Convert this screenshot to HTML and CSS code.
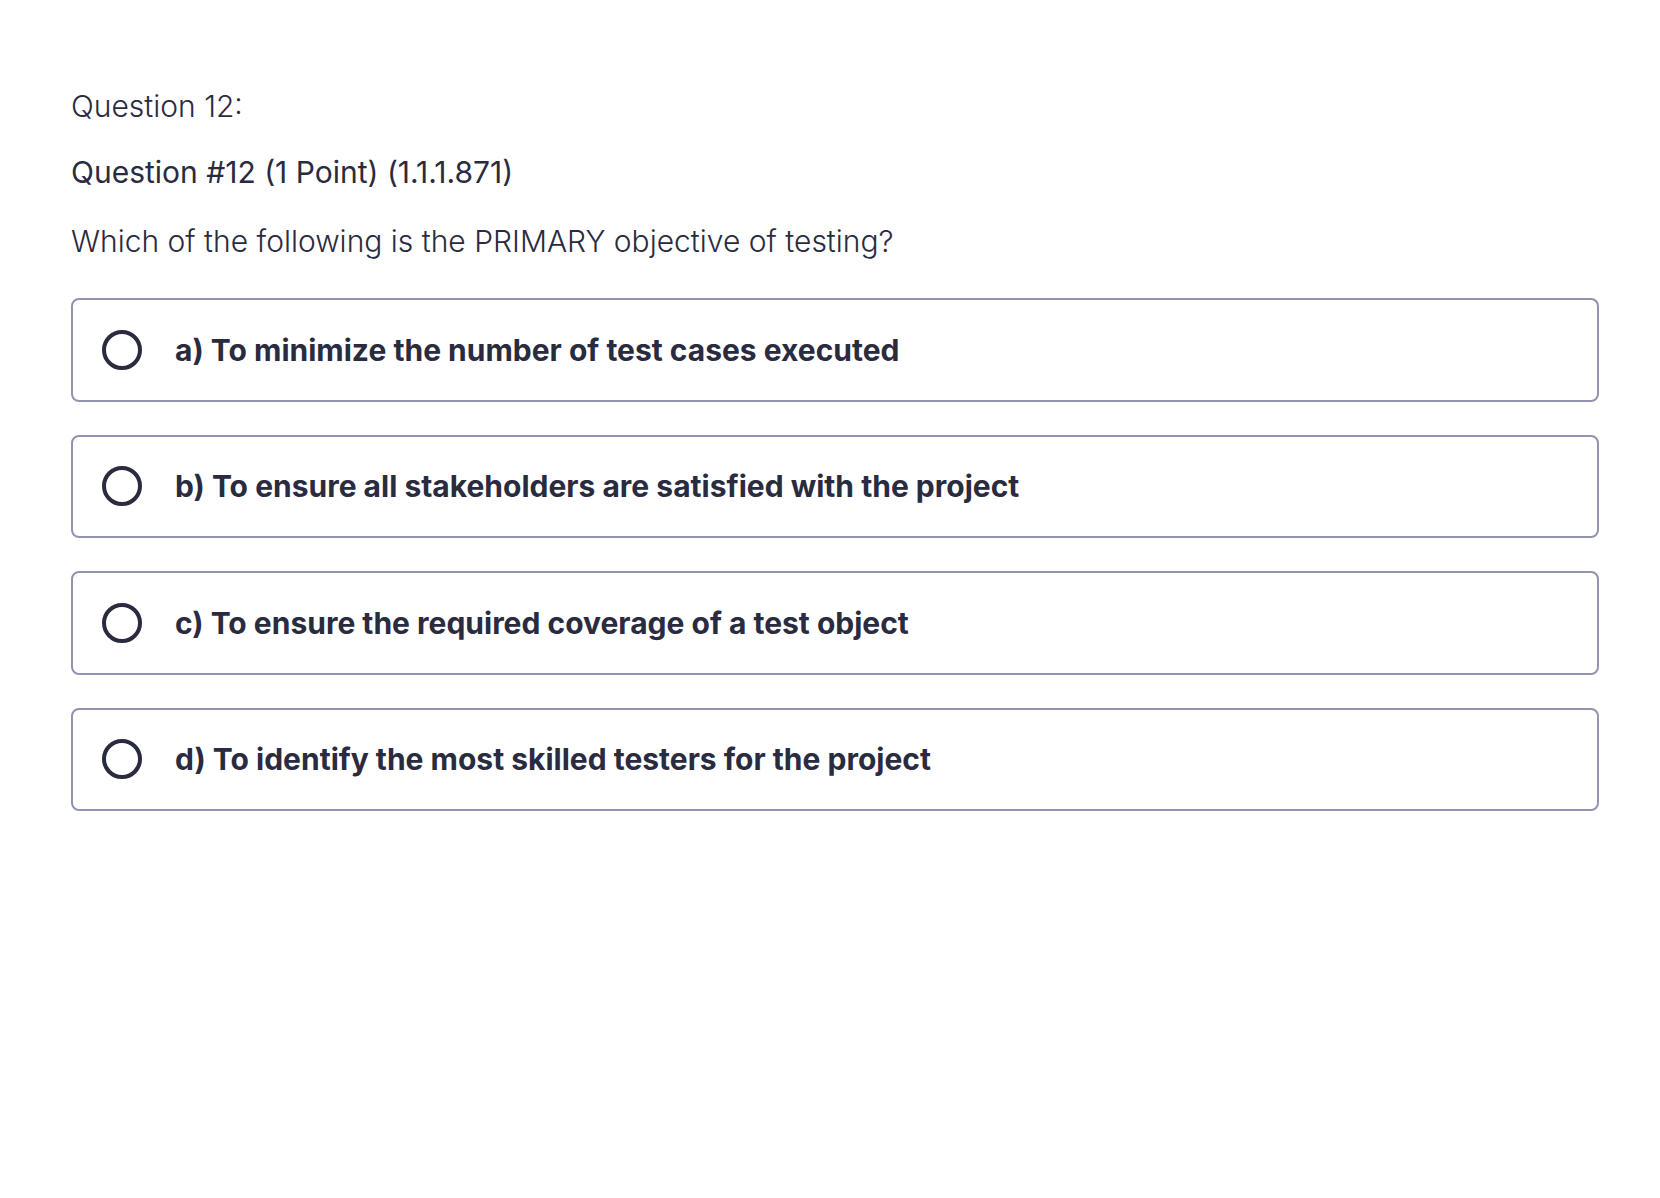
FILE: index.html
```html
<!DOCTYPE html>
<html lang="en">
<head>
<meta charset="utf-8">
<title>Question 12</title>
<link rel="stylesheet" href="styles.css">
</head>
<body>
<main class="quiz">
  <div class="q-label">Question 12:</div>
  <div class="q-title">Question #12 (1 Point) (1.1.1.871)</div>
  <div class="q-prompt">Which of the following is the PRIMARY objective of testing?</div>
  <ul class="options">
    <li class="option"><span class="radio"></span><span class="opt-text">a) To minimize the number of test cases executed</span></li>
    <li class="option"><span class="radio"></span><span class="opt-text">b) To ensure all stakeholders are satisfied with the project</span></li>
    <li class="option"><span class="radio"></span><span class="opt-text">c) To ensure the required coverage of a test object</span></li>
    <li class="option"><span class="radio"></span><span class="opt-text">d) To identify the most skilled testers for the project</span></li>
  </ul>
</main>
</body>
</html>
```

FILE: styles.css
```css
html, body {
  margin: 0;
  padding: 0;
  background: #ffffff;
}
body {
  font-family: Inter, "Noto Sans", "Liberation Sans", sans-serif;
  color: #2a2b3f;
}
.quiz {
  padding: 85px 0 0 71px;
  width: 1528px;
}
.q-label {
  font-size: 30px;
  line-height: 42px;
  font-weight: 300;
}
.q-title {
  font-size: 30px;
  line-height: 42px;
  font-weight: 400;
  margin-top: 24px;
}
.q-prompt {
  font-size: 30px;
  line-height: 42px;
  font-weight: 300;
  margin-top: 27px;
}
.options {
  list-style: none;
  margin: 36px 0 0 0;
  padding: 0;
  display: flex;
  flex-direction: column;
  gap: 33px;
}
.option {
  box-sizing: border-box;
  height: 103.5px;
  border: 2px solid #9194ac;
  border-radius: 8px;
  display: flex;
  align-items: center;
  padding-left: 29px;
}
.radio {
  box-sizing: border-box;
  width: 40px;
  height: 40px;
  border: 4px solid #2a2b3f;
  border-radius: 50%;
  flex: none;
}
.opt-text {
  margin-left: 33px;
  font-size: 30px;
  font-weight: 700;
  line-height: 42px;
}
```
